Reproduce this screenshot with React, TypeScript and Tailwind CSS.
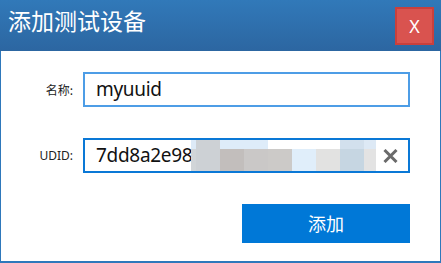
import React from "react";

const blocks: { w: number; top: string; bot: string }[] = [
  { w: 5, top: "#ddeaf7", bot: "#d1d5d8" },
  { w: 24, top: "#cdd1d5", bot: "#cdd1d5" },
  { w: 24, top: "#deecf9", bot: "#c2bebc" },
  { w: 24, top: "#deecf9", bot: "#cac8c7" },
  { w: 24, top: "#ffffff", bot: "#cccac8" },
  { w: 24, top: "#ffffff", bot: "#e0eefa" },
  { w: 24, top: "#ffffff", bot: "#e2e2e1" },
  { w: 24, top: "#d2e0ed", bot: "#c6d6e2" },
  { w: 12, top: "#dde9f5", bot: "#e3e3e3" },
];

export default function App() {
  const font = { fontFamily: '"Noto Sans", "Noto Sans CJK SC", sans-serif' };
  return (
    <div className="w-[441px] h-[263px] flex flex-col bg-white overflow-hidden" style={font}>
      <div className="h-[51px] flex items-start justify-between bg-gradient-to-b from-[#3179b9] to-[#2c66a1]">
        <div className="ml-[8px] mt-[9px] text-[23px] leading-[23px] text-white" style={{ fontFamily: '"Noto Sans CJK SC", sans-serif' }}>
          添加测试设备
        </div>
        <div className="mt-[7px] mr-[7px] w-[39px] h-[38px] bg-[#d9534f] border-2 border-[#c9403c] flex items-center justify-center text-white text-[18px] leading-none">
          X
        </div>
      </div>
      <div className="flex-1 flex flex-col border-l border-r border-b-2 border-[#2e78bb] pt-[21px]">
        <div className="flex items-center">
          <div className="w-[72px] text-right text-[12px] text-[#222]" style={{ fontFamily: '"Noto Sans CJK SC", sans-serif' }}>
            名称:
          </div>
          <div className="ml-[10px] w-[327px] h-[35px] border-2 border-[#4d9de6] flex items-center pl-[11px] text-[19px] tracking-[-0.3px] text-[#111]">
            myuuid
          </div>
        </div>
        <div className="flex items-center mt-[31px]">
          <div className="w-[72px] text-right text-[12px] text-[#222]">UDID:</div>
          <div className="relative ml-[10px] w-[327px] h-[35px] border-2 border-[#0a78d6] flex items-center pl-[11px] text-[19px] tracking-[-0.3px] text-[#111]">
            <span>7dd8a2e98</span>
            <div className="absolute left-[106px] top-0 bottom-0 flex">
              {blocks.map((b, i) => (
                <div key={i} className="flex flex-col" style={{ width: b.w }}>
                  <div className="h-[9px]" style={{ background: b.top }} />
                  <div className="flex-1" style={{ background: b.bot }} />
                </div>
              ))}
            </div>
            <svg className="absolute right-[10px] top-[9px]" width="15" height="14" viewBox="0 0 15 14">
              <path d="M1.5 1 L13.5 13 M13.5 1 L1.5 13" stroke="#6a6a6a" strokeWidth="3" />
            </svg>
          </div>
        </div>
        <div className="flex justify-end mt-[31px] pr-[30px]">
          <div className="w-[168px] h-[39px] bg-[#0078d7] flex items-center justify-center text-white text-[18px]" style={{ fontFamily: '"Noto Sans CJK SC", sans-serif' }}>
            添加
          </div>
        </div>
      </div>
    </div>
  );
}
